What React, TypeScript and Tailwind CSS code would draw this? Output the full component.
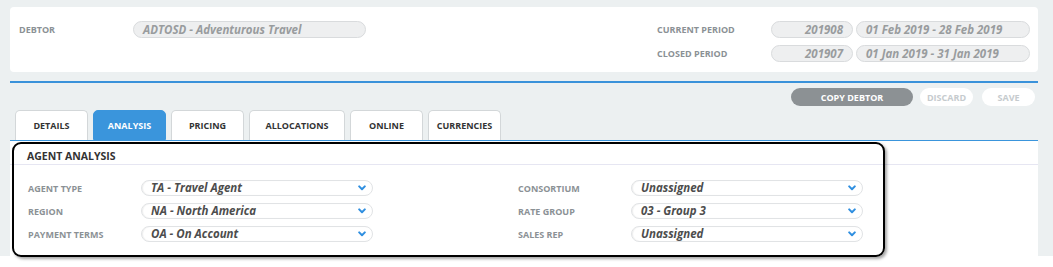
import React from "react";

const Chevron = () => (
  <svg width="8" height="6" viewBox="0 0 8 6" className="shrink-0">
    <path d="M1.2 1.4 L4 4.2 L6.8 1.4" fill="none" stroke="#2f8fe0" strokeWidth="2" strokeLinecap="round" strokeLinejoin="round" />
  </svg>
);

const Select = ({ value }: { value: string }) => (
  <div className="w-[232px] h-[16px] rounded-full border border-[#e1e3e5] bg-white flex items-center justify-between pl-[9px] pr-[6px] shadow-[inset_1px_0_1px_rgba(0,0,0,0.07)]">
    <span className="text-[11.5px] font-bold italic text-[#4d4d4d] leading-none">{value}</span>
    <Chevron />
  </div>
);

const Field = ({ label, value }: { label: string; value: string }) => (
  <div className="flex items-center h-[16px]">
    <div className="w-[113px] text-[9px] font-bold text-[#8b9195] leading-none">{label}</div>
    <Select value={value} />
  </div>
);

const ReadOnly = ({ value, w, right }: { value: string; w: string; right?: boolean }) => (
  <div
    className={`${w} h-[17px] rounded-full border border-[#d9dbdd] bg-[#eeeff0] flex items-center leading-none text-[11.5px] font-bold italic text-[#999c9e] ${
      right ? "justify-end pr-[9px]" : "pl-[9px]"
    }`}
  >
    {value}
  </div>
);

const tabs = [
  { name: "DETAILS", w: "w-[73px]" },
  { name: "ANALYSIS", w: "w-[73px]", active: true },
  { name: "PRICING", w: "w-[73px]" },
  { name: "ALLOCATIONS", w: "w-[96px]" },
  { name: "ONLINE", w: "w-[73px]" },
  { name: "CURRENCIES", w: "w-[73px]" },
];

const TopLabel = ({ children }: { children: React.ReactNode }) => (
  <div className="w-[114px] h-[17px] flex items-center text-[9px] font-bold text-[#8b9195] leading-none">{children}</div>
);

export default function App() {
  return (
    <div className="w-[1053px] h-[267px] bg-white font-['Open_Sans',sans-serif] overflow-hidden">
      <div className="h-[256px] bg-[#ecf0f1] pl-[10px] pr-[15px] pt-[7px] flex flex-col">
        {/* Top card */}
        <div className="h-[65px] bg-white rounded-[4px] flex justify-between pt-[14px] pl-[9px] pr-[8px]">
          <div className="flex items-start">
            <TopLabel>DEBTOR</TopLabel>
            <ReadOnly value="ADTOSD - Adventurous Travel" w="w-[233px]" />
          </div>
          <div className="flex flex-col gap-[7px]">
            <div className="flex items-center">
              <TopLabel>CURRENT PERIOD</TopLabel>
              <div className="flex gap-[3px]">
                <ReadOnly value="201908" w="w-[82px]" right />
                <ReadOnly value="01 Feb 2019 - 28 Feb 2019" w="w-[174px]" />
              </div>
            </div>
            <div className="flex items-center">
              <TopLabel>CLOSED PERIOD</TopLabel>
              <div className="flex gap-[3px]">
                <ReadOnly value="201907" w="w-[82px]" right />
                <ReadOnly value="01 Jan 2019 - 31 Jan 2019" w="w-[174px]" />
              </div>
            </div>
          </div>
        </div>

        {/* Blue rule */}
        <div className="mt-[9px] h-[2px] bg-[#3a92da]" />

        {/* Buttons */}
        <div className="mt-[5px] h-[18px] flex justify-end pr-[3px]">
          <div className="w-[122px] h-[18px] rounded-full bg-[#8c9194] text-white text-[9px] font-bold flex items-center justify-center leading-none">COPY DEBTOR</div>
          <div className="ml-[7px] w-[53px] h-[18px] rounded-full bg-white text-[#c6cbce] text-[9px] font-bold flex items-center justify-center leading-none">DISCARD</div>
          <div className="ml-[9px] w-[53px] h-[18px] rounded-full bg-white text-[#c6cbce] text-[9px] font-bold flex items-center justify-center leading-none">SAVE</div>
        </div>

        {/* Tabs */}
        <div className="mt-[4px] h-[30px] flex items-end gap-[5px] pl-[5px]">
          {tabs.map((t) => (
            <div
              key={t.name}
              className={`${t.w} h-[30px] rounded-t-[5px] flex items-center justify-center text-[9px] font-bold leading-none ${
                t.active
                  ? "bg-[#3a95dc] text-white border border-[#3a95dc]"
                  : "bg-white text-[#333] border border-b-0 border-[#d3d7d9]"
              }`}
            >
              {t.name}
            </div>
          ))}
        </div>

        {/* Panel */}
        <div className="relative flex-1 bg-white border-t border-[#3a95dc]">
          <div className="h-[24px] border-b border-[#e6e6f2] flex items-end pb-[3px] pl-[17px]">
            <span className="text-[10.5px] font-bold text-[#333] leading-none">AGENT ANALYSIS</span>
          </div>
          <div className="pt-[15px] pl-[18px] flex gap-[145px]">
            <div className="flex flex-col gap-[7px]">
              <Field label="AGENT TYPE" value="TA - Travel Agent" />
              <Field label="REGION" value="NA - North America" />
              <Field label="PAYMENT TERMS" value="OA - On Account" />
            </div>
            <div className="flex flex-col gap-[7px]">
              <Field label="CONSORTIUM" value="Unassigned" />
              <Field label="RATE GROUP" value="03 - Group 3" />
              <Field label="SALES REP" value="Unassigned" />
            </div>
          </div>
          {/* annotation outline */}
          <div className="pointer-events-none absolute left-[2px] top-[1px] w-[873px] -bottom-[1px] border-2 border-black rounded-[9px] shadow-[2px_2px_3px_rgba(0,0,0,0.35)]" />
        </div>
      </div>
    </div>
  );
}
